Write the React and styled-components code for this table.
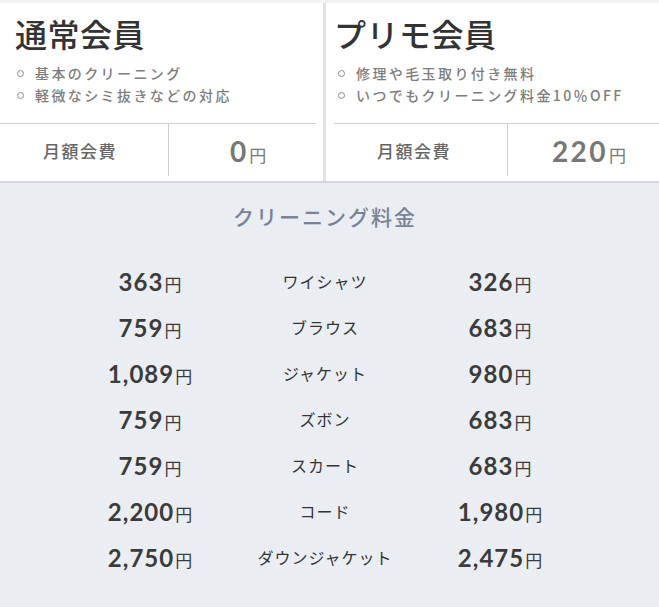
import React from "react";
import styled, { createGlobalStyle } from "styled-components";

const GlobalStyle = createGlobalStyle`
  body {
    margin: 0;
    background: #eaeef3;
    font-family: "Noto Sans CJK JP", "Noto Sans", sans-serif;
  }
`;

const Page = styled.div`
  width: 659px;
  min-height: 607px;
  background: #eaeef3;
`;

const Plans = styled.div`
  display: grid;
  grid-template-columns: 323px 1fr;
  gap: 3px;
  background: #e2e2e2;
  border-top: 3px solid #f2f2f2;
  box-shadow: 0 2px 0 #d4d6da;
`;

const Card = styled.section`
  background: #fff;
  padding: 10px 0 5px;
  display: flex;
  flex-direction: column;
`;

const Title = styled.h2`
  margin: 0;
  padding-left: ${(p) => p.$indent}px;
  font-size: 32px;
  line-height: 40px;
  font-weight: 500;
  color: #333;
  letter-spacing: 0.5px;
`;

const Perks = styled.ul`
  list-style: none;
  margin: 9px 0 17px;
  padding: 0 0 0 ${(p) => p.$indent}px;
`;

const Perk = styled.li`
  position: relative;
  padding-left: 20px;
  font-size: 14px;
  line-height: 22px;
  font-weight: 500;
  color: #7d7d7d;
  letter-spacing: 2.4px;
  &::before {
    content: "";
    position: absolute;
    left: 2px;
    top: 8px;
    width: 5px;
    height: 5px;
    border: 1px solid #8a8a8a;
    border-radius: 50%;
  }
`;

const Fee = styled.div`
  display: grid;
  grid-template-columns: ${(p) => p.$labelWidth}px 1fr;
  height: 52px;
  border-top: 1px solid #cfcfcf;
  margin: 0 ${(p) => p.$right}px 0 ${(p) => p.$left}px;
`;

const FeeLabel = styled.div`
  display: flex;
  align-items: center;
  padding-left: 43px;
  border-right: 1px solid #cfcfcf;
  font-size: 17px;
  font-weight: 500;
  color: #666;
  letter-spacing: 1.5px;
`;

const FeeValue = styled.div`
  display: flex;
  align-items: baseline;
  justify-content: center;
  padding: 10px 0 0 11px;
  color: #777;
`;

const Amount = styled.span`
  font-family: Lato, "Noto Sans", sans-serif;
  font-weight: 700;
  font-size: ${(p) => p.$size}px;
  letter-spacing: ${(p) => p.$spacing}px;
  color: inherit;
`;

const Yen = styled.span`
  font-size: ${(p) => p.$size}px;
  color: inherit;
  margin-left: 1px;
`;

const Prices = styled.section`
  padding: 20px 9px 26px 0;
`;

const PricesTitle = styled.h3`
  margin: 0 0 27px;
  text-align: center;
  font-size: 21px;
  line-height: 30px;
  font-weight: 500;
  color: #7a8297;
  letter-spacing: 2px;
`;

const Table = styled.div`
  width: 525px;
  margin: 0 auto;
  display: grid;
  grid-template-columns: repeat(3, 1fr);
  grid-auto-rows: 46px;
`;

const Cell = styled.div`
  display: flex;
  align-items: center;
  justify-content: center;
`;

const Price = styled.span`
  display: inline-flex;
  align-items: baseline;
  color: #3b3b3b;
`;

const Item = styled.span`
  font-size: 16px;
  color: #333;
  letter-spacing: 1px;
`;

const rows = [
  ["363", "ワイシャツ", "326"],
  ["759", "ブラウス", "683"],
  ["1,089", "ジャケット", "980"],
  ["759", "ズボン", "683"],
  ["759", "スカート", "683"],
  ["2,200", "コード", "1,980"],
  ["2,750", "ダウンジャケット", "2,475"],
];

const PriceTag = ({ value }) => (
  <Price>
    <Amount $size={24} $spacing={1}>
      {value}
    </Amount>
    <Yen $size={17}>円</Yen>
  </Price>
);

export default function App() {
  return (
    <Page>
      <GlobalStyle />
      <Plans>
        <Card>
          <Title $indent={15}>通常会員</Title>
          <Perks $indent={15}>
            <Perk>基本のクリーニング</Perk>
            <Perk>軽微なシミ抜きなどの対応</Perk>
          </Perks>
          <Fee $labelWidth={169} $left={0} $right={7}>
            <FeeLabel>月額会費</FeeLabel>
            <FeeValue>
              <Amount $size={28} $spacing={2}>
                0
              </Amount>
              <Yen $size={17}>円</Yen>
            </FeeValue>
          </Fee>
        </Card>
        <Card>
          <Title $indent={8}>プリモ会員</Title>
          <Perks $indent={10}>
            <Perk>修理や毛玉取り付き無料</Perk>
            <Perk>いつでもクリーニング料金10％OFF</Perk>
          </Perks>
          <Fee $labelWidth={174} $left={8} $right={0}>
            <FeeLabel>月額会費</FeeLabel>
            <FeeValue>
              <Amount $size={28} $spacing={2.5}>
                220
              </Amount>
              <Yen $size={17}>円</Yen>
            </FeeValue>
          </Fee>
        </Card>
      </Plans>
      <Prices>
        <PricesTitle>クリーニング料金</PricesTitle>
        <Table>
          {rows.map(([normal, name, member], i) => (
            <React.Fragment key={i}>
              <Cell>
                <PriceTag value={normal} />
              </Cell>
              <Cell>
                <Item>{name}</Item>
              </Cell>
              <Cell>
                <PriceTag value={member} />
              </Cell>
            </React.Fragment>
          ))}
        </Table>
      </Prices>
    </Page>
  );
}
